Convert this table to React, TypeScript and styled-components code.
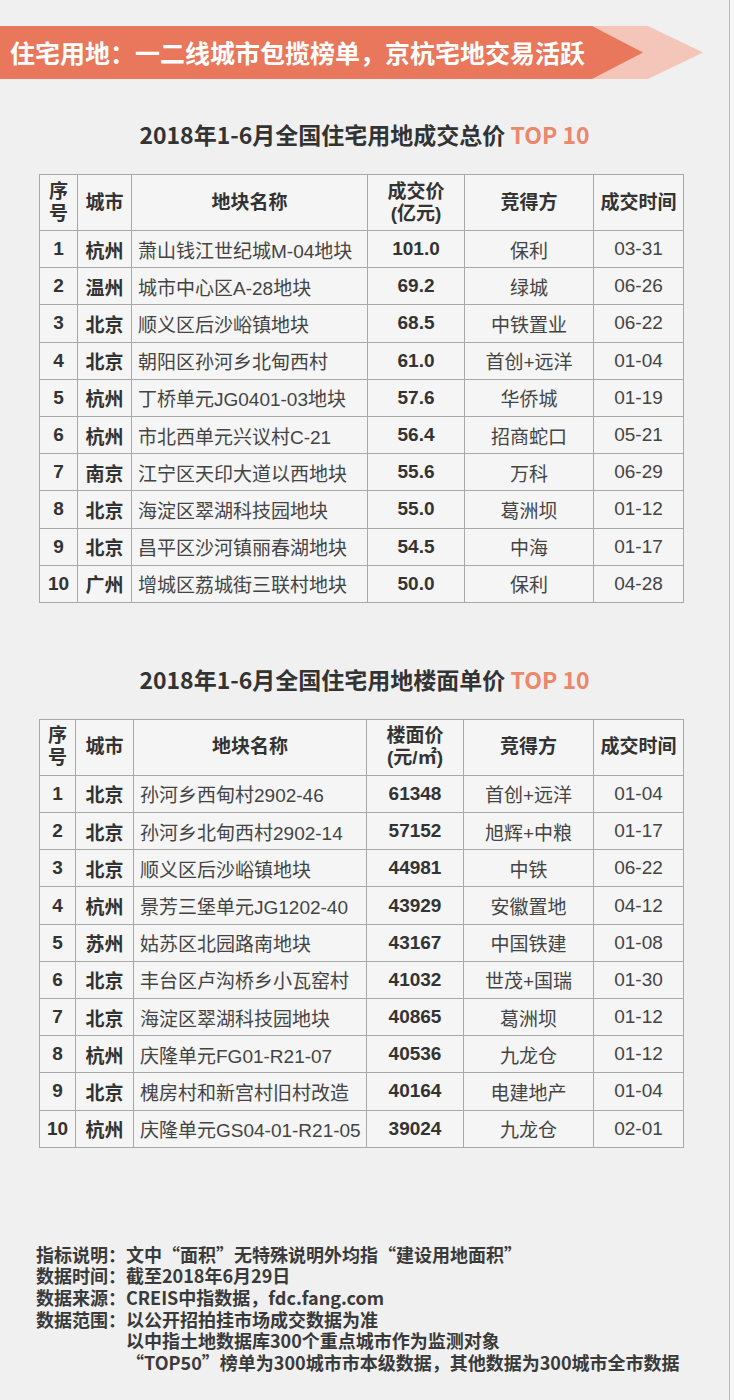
import React from "react";
import styled, { createGlobalStyle } from "styled-components";

const GlobalStyle = createGlobalStyle`
  html, body { margin: 0; padding: 0; background: #f7f7f7; }
  * { box-sizing: border-box; }
`;

const CJK = `"Noto Sans CJK SC", "Noto Sans", sans-serif`;
const MIXED = `"Liberation Sans", "Noto Sans CJK SC", sans-serif`;

const Page = styled.div`
  width: 730px;
  min-height: 1400px;
  background: #f0f0f0;
  border-right: 1px solid #bcbcbc;
  padding-top: 26px;
  display: flex;
  flex-direction: column;
  font-family: ${CJK};
  color: #333;
`;

const Banner = styled.div`
  position: relative;
  height: 53px;
  display: flex;
  align-items: center;
  padding-left: 10px;
`;

const BannerShape = styled.svg`
  position: absolute;
  left: 0;
  top: 0;
  width: 734px;
  height: 53px;
`;

const BannerText = styled.h1`
  position: relative;
  margin: 0;
  font-family: ${CJK};
  font-size: 25px;
  font-weight: 700;
  color: #fff;
  line-height: 53px;
  letter-spacing: 0;
`;

const Title = styled.h2<{ $top: number }>`
  margin: ${(p) => p.$top}px 0 25px;
  text-align: center;
  font-family: ${CJK};
  font-size: 23px;
  font-weight: 700;
  line-height: 30px;
  color: #333;
`;

const Accent = styled.span`
  color: #eb876a;
`;

const Table = styled.div`
  margin-left: 39px;
  width: 645px;
  border-top: 1px solid #a8a8a8;
  border-left: 1px solid #a8a8a8;
  background: #f5f5f5;
  font-family: ${MIXED};
`;

const Row = styled.div<{ $cols: string; $h: number }>`
  display: grid;
  grid-template-columns: ${(p) => p.$cols};
  height: ${(p) => p.$h}px;
`;

const Cell = styled.div<{ $bold?: boolean; $left?: boolean }>`
  border-right: 1px solid #a8a8a8;
  border-bottom: 1px solid #a8a8a8;
  display: flex;
  align-items: center;
  justify-content: ${(p) => (p.$left ? "flex-start" : "center")};
  padding-left: ${(p) => (p.$left ? "6px" : "0")};
  font-size: 19px;
  font-weight: ${(p) => (p.$bold ? 700 : 400)};
  color: ${(p) => (p.$bold ? "#333" : "#444")};
  white-space: nowrap;
  overflow: visible;
`;

const HeadCell = styled.div`
  border-right: 1px solid #a8a8a8;
  border-bottom: 1px solid #a8a8a8;
  display: flex;
  flex-direction: column;
  align-items: center;
  justify-content: center;
  font-size: 19px;
  font-weight: 700;
  line-height: 22px;
  color: #333;
  text-align: center;
`;

const Footer = styled.div`
  margin-top: 96px;
  padding-left: 36px;
  display: grid;
  grid-template-columns: 90px auto;
  font-family: ${CJK};
  font-size: 18px;
  font-weight: 700;
  line-height: 21.6px;
  color: #3a3a3a;
  white-space: nowrap;
`;

const FooterLabel = styled.div``;
const FooterValue = styled.div``;

type Item = [string, string, string, string, string, string];

const top1: Item[] = [
  ["1", "杭州", "萧山钱江世纪城M-04地块", "101.0", "保利", "03-31"],
  ["2", "温州", "城市中心区A-28地块", "69.2", "绿城", "06-26"],
  ["3", "北京", "顺义区后沙峪镇地块", "68.5", "中铁置业", "06-22"],
  ["4", "北京", "朝阳区孙河乡北甸西村", "61.0", "首创+远洋", "01-04"],
  ["5", "杭州", "丁桥单元JG0401-03地块", "57.6", "华侨城", "01-19"],
  ["6", "杭州", "市北西单元兴议村C-21", "56.4", "招商蛇口", "05-21"],
  ["7", "南京", "江宁区天印大道以西地块", "55.6", "万科", "06-29"],
  ["8", "北京", "海淀区翠湖科技园地块", "55.0", "葛洲坝", "01-12"],
  ["9", "北京", "昌平区沙河镇丽春湖地块", "54.5", "中海", "01-17"],
  ["10", "广州", "增城区荔城街三联村地块", "50.0", "保利", "04-28"],
];

const top2: Item[] = [
  ["1", "北京", "孙河乡西甸村2902-46", "61348", "首创+远洋", "01-04"],
  ["2", "北京", "孙河乡北甸西村2902-14", "57152", "旭辉+中粮", "01-17"],
  ["3", "北京", "顺义区后沙峪镇地块", "44981", "中铁", "06-22"],
  ["4", "杭州", "景芳三堡单元JG1202-40", "43929", "安徽置地", "04-12"],
  ["5", "苏州", "姑苏区北园路南地块", "43167", "中国铁建", "01-08"],
  ["6", "北京", "丰台区卢沟桥乡小瓦窑村", "41032", "世茂+国瑞", "01-30"],
  ["7", "北京", "海淀区翠湖科技园地块", "40865", "葛洲坝", "01-12"],
  ["8", "杭州", "庆隆单元FG01-R21-07", "40536", "九龙仓", "01-12"],
  ["9", "北京", "槐房村和新宫村旧村改造", "40164", "电建地产", "01-04"],
  ["10", "杭州", "庆隆单元GS04-01-R21-05", "39024", "九龙仓", "02-01"],
];

function RankTable({ cols, unit, rows }: { cols: string; unit: [string, string]; rows: Item[] }) {
  return (
    <Table>
      <Row $cols={cols} $h={56}>
        <HeadCell>
          <span>序</span>
          <span>号</span>
        </HeadCell>
        <HeadCell>城市</HeadCell>
        <HeadCell>地块名称</HeadCell>
        <HeadCell>
          <span>{unit[0]}</span>
          <span>{unit[1]}</span>
        </HeadCell>
        <HeadCell>竞得方</HeadCell>
        <HeadCell>成交时间</HeadCell>
      </Row>
      {rows.map((r) => (
        <Row key={r[0]} $cols={cols} $h={37.2}>
          <Cell $bold>{r[0]}</Cell>
          <Cell $bold>{r[1]}</Cell>
          <Cell $left>{r[2]}</Cell>
          <Cell $bold>{r[3]}</Cell>
          <Cell>{r[4]}</Cell>
          <Cell>{r[5]}</Cell>
        </Row>
      ))}
    </Table>
  );
}

export default function App() {
  return (
    <>
      <GlobalStyle />
      <Page>
        <Banner>
          <BannerShape viewBox="0 0 734 53">
            <polygon points="0,0 648,0 703,26.5 648,53 0,53" fill="#f3c6b9" />
            <polygon points="0,0 592,0 643,26.5 592,53 0,53" fill="#e8775b" />
          </BannerShape>
          <BannerText>住宅用地：一二线城市包揽榜单，京杭宅地交易活跃</BannerText>
        </Banner>

        <Title $top={40}>
          2018年1-6月全国住宅用地成交总价 <Accent>TOP 10</Accent>
        </Title>
        <RankTable
          cols="38px 54px 236px 97px 129px 90px"
          unit={["成交价", "(亿元)"]}
          rows={top1}
        />

        <Title $top={61}>
          2018年1-6月全国住宅用地楼面单价 <Accent>TOP 10</Accent>
        </Title>
        <RankTable
          cols="36px 58px 233px 97px 130px 90px"
          unit={["楼面价", "(元/㎡)"]}
          rows={top2}
        />

        <Footer>
          <FooterLabel>指标说明：</FooterLabel>
          <FooterValue>文中“面积”无特殊说明外均指“建设用地面积”</FooterValue>
          <FooterLabel>数据时间：</FooterLabel>
          <FooterValue>截至2018年6月29日</FooterValue>
          <FooterLabel>数据来源：</FooterLabel>
          <FooterValue>CREIS中指数据，fdc.fang.com</FooterValue>
          <FooterLabel>数据范围：</FooterLabel>
          <FooterValue>
            以公开招拍挂市场成交数据为准
            <br />
            以中指土地数据库300个重点城市作为监测对象
            <br />
            “TOP50”榜单为300城市市本级数据，其他数据为300城市全市数据
          </FooterValue>
        </Footer>
      </Page>
    </>
  );
}
